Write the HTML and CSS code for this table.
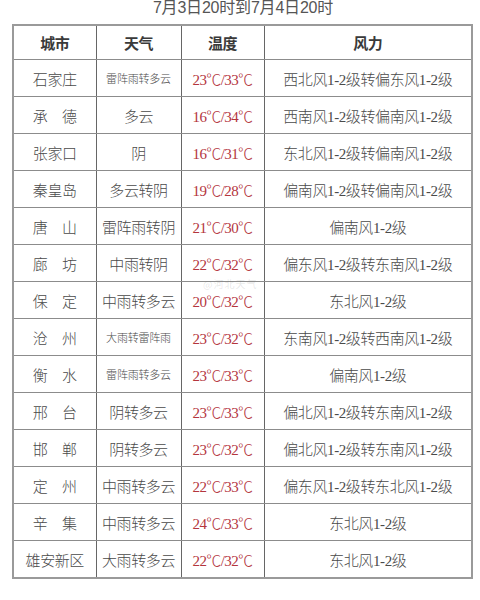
FILE: index.html
```html
<!DOCTYPE html>
<html lang="zh">
<head>
<meta charset="utf-8">
<link rel="stylesheet" href="styles.css">
</head>
<body>
<div class="page">
  <div class="title">7月3日20时到7月4日20时</div>
  <table class="wx">
    <colgroup>
      <col class="c1"><col class="c2"><col class="c3"><col class="c4">
    </colgroup>
    <tr class="head"><th>城市</th><th>天气</th><th>温度</th><th>风力</th></tr>
    <tr><td>石家庄</td><td class="small">雷阵雨转多云</td><td class="t">23℃/33℃</td><td>西北风1-2级转偏东风1-2级</td></tr>
    <tr><td>承　德</td><td>多云</td><td class="t">16℃/34℃</td><td>西南风1-2级转偏南风1-2级</td></tr>
    <tr><td>张家口</td><td>阴</td><td class="t">16℃/31℃</td><td>东北风1-2级转偏南风1-2级</td></tr>
    <tr><td>秦皇岛</td><td>多云转阴</td><td class="t">19℃/28℃</td><td>偏南风1-2级转偏南风1-2级</td></tr>
    <tr><td>唐　山</td><td>雷阵雨转阴</td><td class="t">21℃/30℃</td><td>偏南风1-2级</td></tr>
    <tr><td>廊　坊</td><td>中雨转阴</td><td class="t">22℃/32℃</td><td>偏东风1-2级转东南风1-2级</td></tr>
    <tr><td>保　定</td><td>中雨转多云</td><td class="t">20℃/32℃</td><td>东北风1-2级</td></tr>
    <tr><td>沧　州</td><td class="small">大雨转雷阵雨</td><td class="t">23℃/32℃</td><td>东南风1-2级转西南风1-2级</td></tr>
    <tr><td>衡　水</td><td class="small">雷阵雨转多云</td><td class="t">23℃/33℃</td><td>偏南风1-2级</td></tr>
    <tr><td>邢　台</td><td>阴转多云</td><td class="t">23℃/33℃</td><td>偏北风1-2级转东南风1-2级</td></tr>
    <tr><td>邯　郸</td><td>阴转多云</td><td class="t">23℃/32℃</td><td>偏北风1-2级转东南风1-2级</td></tr>
    <tr><td>定　州</td><td>中雨转多云</td><td class="t">22℃/33℃</td><td>偏东风1-2级转东北风1-2级</td></tr>
    <tr><td>辛　集</td><td>中雨转多云</td><td class="t">24℃/33℃</td><td>东北风1-2级</td></tr>
    <tr><td>雄安新区</td><td>大雨转多云</td><td class="t">22℃/32℃</td><td>东北风1-2级</td></tr>
  </table>
  <div class="mark">@河北天气</div>
</div>
</body>
</html>
```

FILE: styles.css
```css
html, body {
  margin: 0;
  padding: 0;
  background: #ffffff;
}
body {
  font-family: "Liberation Serif", "Noto Sans CJK SC", serif;
  color: #4a4a4a;
}
.page {
  position: relative;
  width: 480px;
  height: 600px;
  overflow: hidden;
}
.title {
  text-align: center;
  font-family: "Liberation Sans", "Noto Sans CJK SC", sans-serif;
  font-size: 16px;
  line-height: 16px;
  height: 25px;
  margin-top: 0;
  margin-bottom: -2px;
  padding-left: 6px;
  color: #555;
  letter-spacing: -0.2px;
}
.wx {
  border-collapse: collapse;
  margin-left: 12px;
  margin-top: 1px;
  width: 459px;
  table-layout: fixed;
  border: 2px solid #9a9a9a;
}
.c1 { width: 83px; }
.c2 { width: 85px; }
.c3 { width: 83px; }
.c4 { width: 208px; }
.wx th, .wx td {
  border-top: 1.5px solid #8c8c8c;
  border-bottom: 1.5px solid #8c8c8c;
  border-left: 1px solid #666;
  border-right: 1px solid #666;
  text-align: center;
  padding: 0;
  height: 36px;
  font-size: 15px;
  font-weight: 300;
  white-space: nowrap;
  letter-spacing: -0.4px;
}
.wx tr.head th {
  height: 33px;
  font-weight: 700;
  color: #3a3a3a;
  font-size: 15px;
}
.wx td.small {
  font-size: 11px;
  letter-spacing: -0.2px;
}
.wx td.t {
  color: #b4353d;
  letter-spacing: -0.6px;
}
.mark {
  position: absolute;
  left: 203px;
  top: 278px;
  font-family: "Noto Sans CJK SC", sans-serif;
  font-size: 10px;
  line-height: 12px;
  color: rgba(120, 120, 120, 0.18);
  letter-spacing: 1px;
}
```
